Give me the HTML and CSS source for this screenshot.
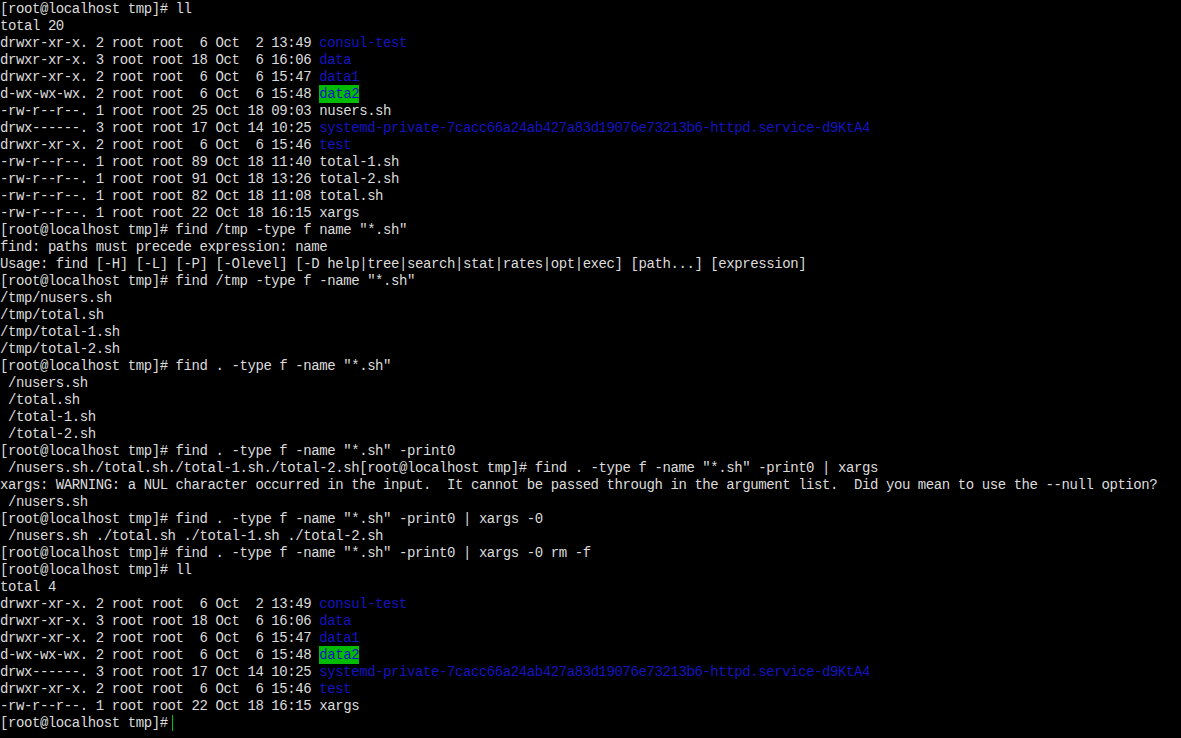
FILE: index.html
```html
<!DOCTYPE html>
<html lang="en">
<head>
<meta charset="utf-8">
<title>Terminal</title>
<link rel="stylesheet" href="styles.css">
</head>
<body>
<pre class="term">[root@localhost tmp]# ll
total 20
drwxr-xr-x. 2 root root  6 Oct  2 13:49 <span class="dir">consul-test</span>
drwxr-xr-x. 3 root root 18 Oct  6 16:06 <span class="dir">data</span>
drwxr-xr-x. 2 root root  6 Oct  6 15:47 <span class="dir">data1</span>
d-wx-wx-wx. 2 root root  6 Oct  6 15:48 <span class="sticky">data2</span>
-rw-r--r--. 1 root root 25 Oct 18 09:03 nusers.sh
drwx------. 3 root root 17 Oct 14 10:25 <span class="dir">systemd-private-7cacc66a24ab427a83d19076e73213b6-httpd.service-d9KtA4</span>
drwxr-xr-x. 2 root root  6 Oct  6 15:46 <span class="dir">test</span>
-rw-r--r--. 1 root root 89 Oct 18 11:40 total-1.sh
-rw-r--r--. 1 root root 91 Oct 18 13:26 total-2.sh
-rw-r--r--. 1 root root 82 Oct 18 11:08 total.sh
-rw-r--r--. 1 root root 22 Oct 18 16:15 xargs
[root@localhost tmp]# find /tmp -type f name "*.sh"
find: paths must precede expression: name
Usage: find [-H] [-L] [-P] [-Olevel] [-D help|tree|search|stat|rates|opt|exec] [path...] [expression]
[root@localhost tmp]# find /tmp -type f -name "*.sh"
/tmp/nusers.sh
/tmp/total.sh
/tmp/total-1.sh
/tmp/total-2.sh
[root@localhost tmp]# find . -type f -name "*.sh"
 /nusers.sh
 /total.sh
 /total-1.sh
 /total-2.sh
[root@localhost tmp]# find . -type f -name "*.sh" -print0
 /nusers.sh./total.sh./total-1.sh./total-2.sh[root@localhost tmp]# find . -type f -name "*.sh" -print0 | xargs
xargs: WARNING: a NUL character occurred in the input.  It cannot be passed through in the argument list.  Did you mean to use the --null option?
 /nusers.sh
[root@localhost tmp]# find . -type f -name "*.sh" -print0 | xargs -0
 /nusers.sh ./total.sh ./total-1.sh ./total-2.sh
[root@localhost tmp]# find . -type f -name "*.sh" -print0 | xargs -0 rm -f
[root@localhost tmp]# ll
total 4
drwxr-xr-x. 2 root root  6 Oct  2 13:49 <span class="dir">consul-test</span>
drwxr-xr-x. 3 root root 18 Oct  6 16:06 <span class="dir">data</span>
drwxr-xr-x. 2 root root  6 Oct  6 15:47 <span class="dir">data1</span>
d-wx-wx-wx. 2 root root  6 Oct  6 15:48 <span class="sticky">data2</span>
drwx------. 3 root root 17 Oct 14 10:25 <span class="dir">systemd-private-7cacc66a24ab427a83d19076e73213b6-httpd.service-d9KtA4</span>
drwxr-xr-x. 2 root root  6 Oct  6 15:46 <span class="dir">test</span>
-rw-r--r--. 1 root root 22 Oct 18 16:15 xargs
[root@localhost tmp]#<span class="cursor"></span></pre>
</body>
</html>
```

FILE: styles.css
```css
html, body {
  margin: 0;
  padding: 0;
  background: #000;
  height: 100%;
  overflow: hidden;
}

.term {
  margin: 0;
  padding: 1px 0 0 0;
  color: #dcdcdc;
  font-family: "Liberation Mono", "DejaVu Sans Mono", monospace;
  font-size: 14px;
  letter-spacing: -0.42px;
  line-height: 17px;
  white-space: pre;
}

.dir {
  color: #1414c0;
}

.sticky {
  background: #00bc00;
  color: #1414c0;
  padding: 1px 0;
}

.cursor {
  display: inline-block;
  width: 1px;
  height: 16px;
  margin-left: 4px;
  vertical-align: top;
  background: #00c800;
}
```
